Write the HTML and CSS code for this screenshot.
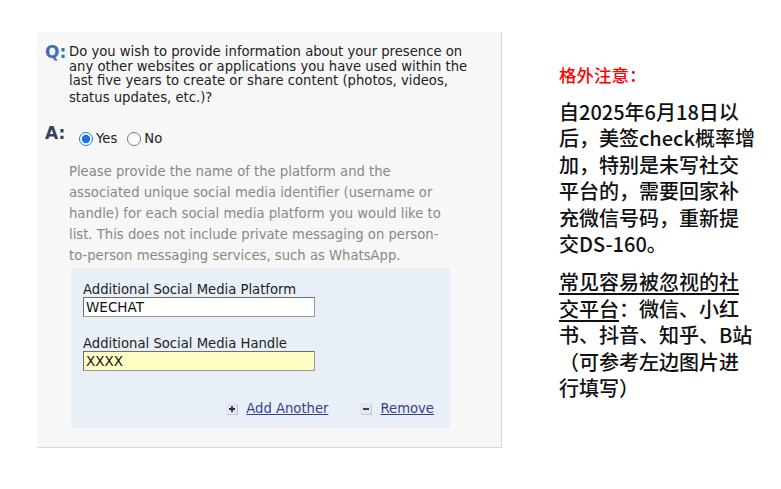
FILE: index.html
```html
<!DOCTYPE html>
<html lang="zh">
<head>
<meta charset="utf-8">
<link rel="stylesheet" href="styles.css">
</head>
<body>
<div class="page">
  <div class="panel">
    <div class="qa-row q-row">
      <div class="qa-label q-label">Q:</div>
      <div class="question">Do you wish to provide information about your presence on any other websites or applications you have used within the last five years to create or share content (photos, videos, <span class="last-line">status updates, etc.)?</span></div>
    </div>
    <div class="qa-row a-row">
      <div class="qa-label a-label">A:</div>
      <div class="answers">
        <label class="radio-opt"><input type="radio" name="yn" checked><span>Yes</span></label>
        <label class="radio-opt"><input type="radio" name="yn"><span>No</span></label>
      </div>
    </div>
    <p class="hint">Please provide the name of the platform and the associated unique social media identifier (username or handle) for each social media platform you would like to list. This does not include private messaging on person-to-person messaging services, such as WhatsApp.</p>
    <div class="social-box">
      <div class="field">
        <div class="field-label">Additional Social Media Platform</div>
        <input class="field-input" type="text" value="WECHAT">
      </div>
      <div class="field">
        <div class="field-label">Additional Social Media Handle</div>
        <input class="field-input yellow" type="text" value="XXXX">
      </div>
      <div class="actions">
        <a class="action" href="#"><span class="icon-btn"><svg viewBox="0 0 8 8" width="8" height="8"><path d="M4 1v6M1 4h6" stroke="#1f2a6b" stroke-width="1.8"/></svg></span><span class="action-text">Add Another</span></a>
        <a class="action" href="#"><span class="icon-btn"><svg viewBox="0 0 8 8" width="8" height="8"><path d="M1 4h6" stroke="#1f2a6b" stroke-width="1.8"/></svg></span><span class="action-text">Remove</span></a>
      </div>
    </div>
  </div>
  <div class="notes">
    <div class="notes-title">格外注意：</div>
    <p class="notes-p">自2025年6月18日以后，美签check概率增加，特别是未写社交平台的，需要回家补充微信号码，重新提交DS-160。</p>
    <p class="notes-p"><u>常见容易被忽视的社交平台</u>：微信、小红书、抖音、知乎、B站（可参考左边图片进行填写）</p>
  </div>
</div>
</body>
</html>
```

FILE: styles.css
```css
html, body {
  margin: 0;
  padding: 0;
  background: #ffffff;
}
.page {
  display: flex;
  align-items: flex-start;
}
.panel {
  margin-left: 37px;
  margin-top: 32px;
  width: 465px;
  height: 416px;
  box-sizing: border-box;
  background: #f7f7f7;
  border-right: 1px solid #d9d9d9;
  border-bottom: 1px solid #d9d9d9;
  padding: 13px 0 0 8px;
  font-family: "DejaVu Sans", Verdana, sans-serif;
}
.qa-row {
  display: flex;
  align-items: flex-start;
}
.qa-label {
  width: 24px;
  flex: none;
  font-weight: bold;
  font-size: 17px;
  line-height: 18px;
}
.q-label {
  color: #3d6fb8;
  margin-top: -2px;
}
.a-label {
  color: #34445a;
  margin-top: -1px;
}
.question {
  font-size: 13.2px;
  line-height: 14.5px;
  color: #222222;
  width: 404px;
}
.last-line {
  display: inline-block;
  margin-top: 2px;
}
.a-row {
  margin-top: 20px;
}
.answers {
  display: flex;
  gap: 8px;
  margin-top: 6px;
  margin-left: 8px;
}
.radio-opt {
  display: flex;
  align-items: center;
  font-size: 13.2px;
  color: #222222;
}
.radio-opt input {
  width: 14px;
  height: 14px;
  margin: 0 3px 0 2px;
  accent-color: #1a73e8;
}
.hint {
  margin: 15px 0 0 24px;
  width: 378px;
  font-size: 13.2px;
  line-height: 21px;
  color: #888888;
}
.social-box {
  margin: 2px 0 0 26px;
  width: 379px;
  height: 160px;
  box-sizing: border-box;
  background: #e8eff7;
  padding: 14px 0 0 12px;
}
.field {
  margin-bottom: 19px;
}
.field-label {
  font-size: 13.2px;
  line-height: 15px;
  color: #222222;
}
.field-input {
  display: block;
  width: 232px;
  height: 20px;
  box-sizing: border-box;
  margin: 0;
  padding: 0 2px;
  border: 1px solid #9a9a9a;
  border-top-color: #6e6e6e;
  border-left-color: #6e6e6e;
  background: #ffffff;
  font-family: "DejaVu Sans", Verdana, sans-serif;
  font-size: 13.5px;
  color: #111111;
  outline: none;
}
.field-input.yellow {
  background: #ffffc4;
}
.actions {
  display: flex;
  justify-content: flex-end;
  gap: 32px;
  padding-right: 16px;
  margin-top: 30px;
}
.action {
  display: flex;
  align-items: center;
  gap: 9px;
  text-decoration: none;
}
.icon-btn {
  width: 11px;
  height: 11px;
  display: flex;
  align-items: center;
  justify-content: center;
  background: #e4e6ea;
  box-shadow: 1px 1px 0 #c4c7cc;
}
.action-text {
  font-size: 13.2px;
  color: #35428a;
  text-decoration: underline;
}
.notes {
  margin-left: 57px;
  margin-top: 62px;
  width: 198px;
  font-family: "Noto Sans CJK SC", "Noto Sans", sans-serif;
}
.notes-title {
  color: #ff0000;
  font-size: 17.5px;
  line-height: 26px;
  font-weight: 500;
}
.notes-p {
  margin: 11px 0 0 0;
  font-size: 20px;
  line-height: 26.4px;
  font-weight: 500;
  color: #111111;
}
.notes-p + .notes-p {
  margin-top: 12px;
}
.notes-p u {
  text-decoration-thickness: 1.5px;
  text-underline-offset: 3px;
}
```
